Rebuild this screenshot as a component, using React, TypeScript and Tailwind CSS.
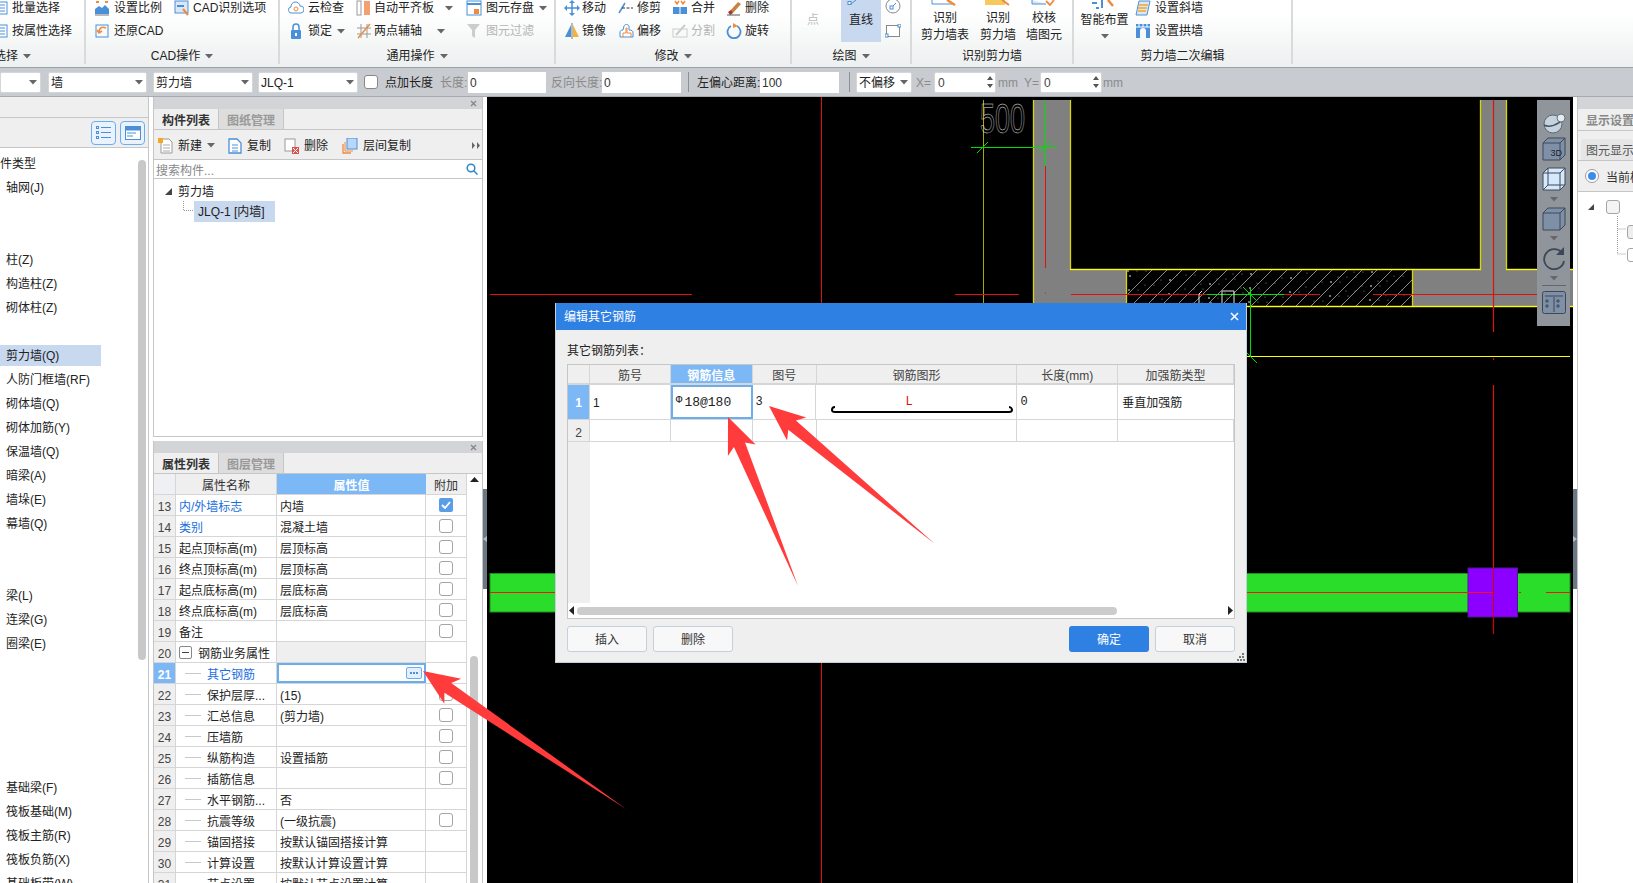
import type { ReactNode } from "react";

const BLUE = "#4a90d9";
const ORANGE = "#f08a3c";

const Caret = ({ className = "" }: { className?: string }) => (
  <svg width="8" height="5" viewBox="0 0 8 5" className={`shrink-0 ${className}`}>
    <path d="M0 0h8L4 4.5z" fill="#666" />
  </svg>
);

const Ic = ({ children, w = 16, h = 16 }: { children: ReactNode; w?: number; h?: number }) => (
  <svg width={w} height={h} viewBox={`0 0 ${w} ${h}`} fill="none" className="shrink-0">
    {children}
  </svg>
);

const icons: Record<string, ReactNode> = {
  list: <Ic><rect x="1" y="2" width="14" height="12" stroke={BLUE} fill="#fff" /><path d="M3 5h10M3 8h10M3 11h10" stroke={BLUE} /></Ic>,
  scale: <Ic><path d="M1 14V9l4-3 3 2 3-3 4 4v5z" fill={BLUE} /><path d="M1 15h14" stroke="#777" /><path d="M2 2h3M11 2h3" stroke={ORANGE} strokeWidth="2" /></Ic>,
  cad: <Ic><rect x="1" y="1" width="13" height="12" fill="#dbe7f5" stroke={BLUE} /><path d="M9 9l5 6" stroke={ORANGE} strokeWidth="2" /><path d="M3 6h7" stroke={BLUE} strokeWidth="2" /></Ic>,
  restore: <Ic><rect x="2" y="2" width="12" height="12" stroke={BLUE} /><path d="M12 5c-4-2-7 0-7 4M3 7l2 3 3-2" stroke={ORANGE} strokeWidth="1.6" /></Ic>,
  cloud: <Ic><path d="M4 13a3 3 0 0 1-1-6 4.500 4.500 0 0 1 9-1 3.500 3.500 0 0 1 1 7z" stroke={BLUE} fill="#fff" /><circle cx="8" cy="9" r="2" stroke={ORANGE} /></Ic>,
  align: <Ic><rect x="1" y="1" width="4" height="14" fill="#fff" stroke="#999" /><rect x="8" y="1" width="6" height="14" fill="#f5a070" /></Ic>,
  save: <Ic><rect x="1" y="1" width="14" height="14" fill="#fff" stroke={BLUE} /><path d="M1 4h14" stroke={BLUE} strokeWidth="2" /><rect x="8" y="9" width="5" height="5" fill={ORANGE} /></Ic>,
  lock: <Ic><path d="M5 7V4a3 3 0 0 1 6 0v3" stroke={BLUE} strokeWidth="1.500" /><rect x="3" y="7" width="10" height="9" rx="1" fill={BLUE} /><rect x="7" y="10" width="2" height="3" fill="#fff" /></Ic>,
  axis: <Ic><path d="M1 5h14M1 11h14M5 1v14M11 1v14" stroke="#999" /><path d="M2 15L14 1" stroke={ORANGE} strokeWidth="1.500" /></Ic>,
  filter: <Ic><path d="M1 1h13L9 7v8l-3-2V7z" fill="#ccc" /></Ic>,
  move: <Ic><path d="M8 1v14M1 8h14" stroke={BLUE} strokeWidth="1.500" /><path d="M8 0l3 3H5zM8 16l-3-3h6zM0 8l3-3v6zM16 8l-3 3V5z" fill={BLUE} /></Ic>,
  trim: <Ic><path d="M1 13L7 3" stroke={BLUE} strokeWidth="1.500" /><path d="M4 8h11" stroke="#333" strokeDasharray="3 1.500" /></Ic>,
  merge: <Ic><rect x="1" y="7" width="14" height="7" fill={BLUE} /><path d="M8 7v7" stroke="#fff" /><path d="M3 1l2 3 2-3M9 1l2 3 2-3" stroke={ORANGE} strokeWidth="1.500" /></Ic>,
  erase: <Ic><path d="M4 11l8-9 3 2-8 9z" fill="#c9823d" /><path d="M2 12l3-2 2 3-3 2z" fill="#a33" /><path d="M1 15h13" stroke="#555" /></Ic>,
  mirror: <Ic><path d="M7 2v12H1z" fill={BLUE} /><path d="M9 2v12h6z" fill="#f5b23c" /><path d="M8 0v16" stroke="#777" /></Ic>,
  offset: <Ic><path d="M2 14V9c0-1 1-2 3-2l1-4c1-2 4-2 5 0v4c3 0 4 1 4 3v4z" stroke={BLUE} fill="#fff" /><path d="M5 14v-4h3V5h1v5h4v4" stroke={ORANGE} /></Ic>,
  split: <Ic><rect x="1" y="6" width="14" height="8" stroke="#ccc" /><path d="M4 12L13 2" stroke="#ccc" strokeWidth="2" /></Ic>,
  rotate: <Ic><path d="M5 3a6.500 6.500 0 1 0 6 0" stroke={BLUE} strokeWidth="1.800" /><path d="M7 0l5 3-5 2z" fill={ORANGE} /></Ic>,
  slant: <Ic><path d="M4 1h11l-3 14H1z" fill="#dbe7f5" stroke={BLUE} /><path d="M4 5h9M3 8h9M3 11h8" stroke="#f5a623" strokeWidth="1.500" /></Ic>,
  arch: <Ic><path d="M1 1h14v14h-4v-7a3 3 0 0 0-6 0v7H1z" fill={BLUE} /><path d="M1 4h14M4 1v3M8 1v3M12 1v3" stroke="#fff" /></Ic>,
  create: <Ic><path d="M3 1h8l3 3v11H3z" fill="#fff" stroke="#999" /><path d="M5 7h7M5 10h7M5 13h7" stroke="#aaa" /><rect x="0" y="0" width="5" height="5" fill="#f5a623" /></Ic>,
  copy: <Ic><path d="M2 1h8l4 4v10H2z" fill="#fff" stroke={BLUE} strokeWidth="1.300" /><path d="M5 7h6M5 10h6M5 13h6" stroke={BLUE} /></Ic>,
  del: <Ic><rect x="1" y="1" width="10" height="12" fill="#fff" stroke="#999" /><rect x="8" y="9" width="7" height="7" fill="#d9534f" /><path d="M9 10l5 5M14 10l-5 5" stroke="#fff" /></Ic>,
  layers: <Ic><path d="M1 6v9h8" stroke={ORANGE} strokeWidth="1.300" /><path d="M3 4v9h8" stroke={ORANGE} /><rect x="5" y="0" width="10" height="11" fill="#b9d7fa" stroke={BLUE} /></Ic>,
};

function RI({ icon, text, caret, off, gap = 4, cg = 5 }: { icon: string; text: string; caret?: boolean; off?: boolean; gap?: number; cg?: number }) {
  return (
    <div className="flex items-center h-[22px]">
      {icons[icon]}
      <span className={`whitespace-nowrap ${off ? "text-[#b5b5b5]" : "text-[#222]"}`} style={{ marginLeft: gap }}>{text}</span>
      {caret && <span className="flex" style={{ marginLeft: cg }}><Caret /></span>}
    </div>
  );
}

function Group({ w, label, children, labelClass = "justify-center", caret = true }: { w: number; label: string; children: ReactNode; labelClass?: string; caret?: boolean }) {
  return (
    <div className="flex flex-col h-[64px] border-r-2 border-[#d8dbdd] shrink-0" style={{ width: w }}>
      <div className="h-[44px] flex overflow-hidden relative">{children}</div>
      <div className={`flex-1 flex items-center gap-[5px] pt-[4px] text-[#222] ${labelClass}`}>
        <span>{label}</span>
        {caret && <Caret />}
      </div>
    </div>
  );
}

function BigBtn({ w, a, b, stub }: { w: number; a: string; b: string; stub: ReactNode }) {
  return (
    <div className="flex flex-col items-center leading-[17px] text-[#222] shrink-0" style={{ width: w }}>
      <div className="h-[11px]">{stub}</div>
      <span>{a}</span>
      <span className="whitespace-nowrap">{b}</span>
    </div>
  );
}

function Ribbon() {
  return (
    <div className="h-[67px] shrink-0 flex bg-linear-to-b from-white from-20% to-[#edf0f0] overflow-hidden">
      <Group w={86} label="选择" labelClass="justify-start -ml-[6px]">
        <div className="-mt-[3px] -ml-[8px] flex flex-col gap-[1px]">
          <RI icon="list" text="批量选择" />
          <RI icon="list" text="按属性选择" />
        </div>
      </Group>
      <Group w={194} label="CAD操作">
        <div className="-mt-[3px] ml-[8px] w-[80px] flex flex-col gap-[1px]">
          <RI icon="scale" text="设置比例" />
          <RI icon="restore" text="还原CAD" />
        </div>
        <div className="-mt-[3px]">
          <RI icon="cad" text="CAD识别选项" gap={3} />
        </div>
      </Group>
      <Group w={276} label="通用操作">
        <div className="-mt-[3px] ml-[8px] w-[68px] flex flex-col gap-[1px]">
          <RI icon="cloud" text="云检查" />
          <RI icon="lock" text="锁定" caret />
        </div>
        <div className="-mt-[3px] w-[110px] flex flex-col gap-[1px]">
          <RI icon="align" text="自动平齐板" gap={2} caret cg={11} />
          <RI icon="axis" text="两点辅轴" gap={2} caret cg={15} />
        </div>
        <div className="-mt-[3px] flex flex-col gap-[1px]">
          <RI icon="save" text="图元存盘" caret />
          <RI icon="filter" text="图元过滤" off />
        </div>
      </Group>
      <Group w={236} label="修改">
        <div className="-mt-[3px] ml-[8px] w-[54px] flex flex-col gap-[1px]">
          <RI icon="move" text="移动" gap={2} />
          <RI icon="mirror" text="镜像" gap={2} />
        </div>
        <div className="-mt-[3px] w-[54px] flex flex-col gap-[1px]">
          <RI icon="trim" text="修剪" gap={3} />
          <RI icon="offset" text="偏移" gap={3} />
        </div>
        <div className="-mt-[3px] w-[54px] flex flex-col gap-[1px]">
          <RI icon="merge" text="合并" gap={3} />
          <RI icon="split" text="分割" gap={3} off />
        </div>
        <div className="-mt-[3px] flex flex-col gap-[1px]">
          <RI icon="erase" text="删除" gap={3} />
          <RI icon="rotate" text="旋转" gap={3} />
        </div>
      </Group>
      <Group w={120} label="绘图">
        <div className="w-[42px] pt-[12px] text-center text-[#bbb]">点</div>
        <div className="ml-[7px] w-[40px] h-[42px] bg-[#c7d8ef] pt-[12px] text-center text-[#222] relative">
          直线
          <svg width="14" height="10" viewBox="0 0 14 10" className="absolute left-[5px] top-0">
            <path d="M5 4L10 0" stroke={BLUE} />
            <rect x="2" y="1.500" width="3" height="3" fill="#fff" stroke={BLUE} />
          </svg>
        </div>
        <div className="ml-[4px] flex flex-col">
          <svg width="16" height="24" viewBox="0 0 16 24">
            <circle cx="8" cy="6" r="7" fill="#fff" stroke="#888" />
            <path d="M6 8l5-5" stroke={BLUE} />
            <rect x="5" y="6" width="3" height="3" fill="#fff" stroke={BLUE} />
          </svg>
          <svg width="16" height="14" viewBox="0 0 16 14">
            <rect x="1.500" y="1.500" width="13" height="11" fill="#fff" stroke="#888" />
            <rect x="0" y="10" width="3" height="3" fill="#fff" stroke={BLUE} />
            <rect x="13" y="0" width="3" height="3" fill="#fff" stroke={BLUE} />
          </svg>
        </div>
      </Group>
      <Group w={162} label="识别剪力墙" caret={false}>
        <BigBtn w={66} a="识别" b="剪力墙表" stub={<svg width="30" height="6" viewBox="0 0 30 6"><path d="M2 0v4h20" stroke={BLUE} fill="none" /><path d="M17 0l8 5" stroke={ORANGE} strokeWidth="2.500" /></svg>} />
        <BigBtn w={40} a="识别" b="剪力墙" stub={<svg width="30" height="6" viewBox="0 0 30 6"><rect x="2" y="0" width="20" height="5" fill="#f7c95c" /><path d="M19 0l7 5" stroke={ORANGE} strokeWidth="2" /></svg>} />
        <BigBtn w={52} a="校核" b="墙图元" stub={<svg width="28" height="6" viewBox="0 0 28 6"><path d="M2 0v4h14" stroke={BLUE} fill="#dbe7f5" /><path d="M16 1l4 4 4-5" stroke={ORANGE} strokeWidth="1.800" fill="none" /></svg>} />
      </Group>
      <Group w={219} label="剪力墙二次编辑" caret={false}>
        <div className="w-[61px] flex flex-col items-center text-[#222] leading-[16px] shrink-0">
          <div className="h-[12px]">
            <svg width="30" height="9" viewBox="0 0 30 9"><path d="M2 3h5M12 0v8M6 8h3" stroke={BLUE} strokeWidth="2" /><path d="M18 0l5 6" stroke={ORANGE} strokeWidth="2.500" /></svg>
          </div>
          <span className="whitespace-nowrap">智能布置</span>
          <Caret className="mt-[6px]" />
        </div>
        <div className="-mt-[3px] flex flex-col gap-[1px]">
          <RI icon="slant" text="设置斜墙" />
          <RI icon="arch" text="设置拱墙" />
        </div>
      </Group>
      <div className="flex-1" />
    </div>
  );
}

function Combo({ w, text }: { w: number; text: string }) {
  return (
    <div className="h-[21px] bg-white border border-[#d4d6d9] rounded-[2px] flex items-center pl-[2px] pr-[3px] justify-between text-[#222] shrink-0" style={{ width: w }}>
      <span className="pt-[2px]">{text}</span>
      <Caret />
    </div>
  );
}

const Inp = ({ w, text }: { w: number; text: string }) => (
  <div className="h-[21px] bg-white flex items-center pl-[2px] pt-[2px] text-[#333] shrink-0" style={{ width: w }}>{text}</div>
);

function Spin({ w, text }: { w: number; text: string }) {
  return (
    <div className="h-[21px] bg-white border border-[#d4d6d9] rounded-[2px] flex items-center justify-between pl-[3px] pr-[2px] text-[#444] shrink-0" style={{ width: w }}>
      <span className="pt-[2px]">{text}</span>
      <span className="flex flex-col gap-[4px]">
        <svg width="6" height="4" viewBox="0 0 6 4"><path d="M0 4h6L3 0z" fill="#555" /></svg>
        <svg width="6" height="4" viewBox="0 0 6 4"><path d="M0 0h6L3 4z" fill="#555" /></svg>
      </span>
    </div>
  );
}

function Toolbar() {
  return (
    <div className="h-[30px] shrink-0 bg-[#c8cbd0] border-t border-t-[#9da2a7] border-b border-b-[#a7abb0] flex items-center overflow-hidden">
      <Combo w={41} text="" />
      <div className="w-[7px]" />
      <Combo w={99} text="墙" />
      <div className="w-[6px]" />
      <Combo w={100} text="剪力墙" />
      <div className="w-[5px]" />
      <Combo w={100} text="JLQ-1" />
      <div className="w-[6px] shrink-0" />
      <div className="w-[14px] h-[14px] bg-white border border-[#888] rounded-[3px] shrink-0" />
      <span className="ml-[7px] pt-[2px] w-[55px] shrink-0 text-[#222] whitespace-nowrap">点加长度</span>
      <span className="w-[28px] pt-[2px] shrink-0 text-[#8a8a8a] whitespace-nowrap">长度:</span>
      <Inp w={78} text="0" />
      <span className="ml-[5px] pt-[2px] w-[51px] shrink-0 text-[#8a8a8a] whitespace-nowrap">反向长度:</span>
      <Inp w={79} text="0" />
      <div className="ml-[7px] w-[1px] h-[20px] bg-[#8d9095] shrink-0" />
      <span className="ml-[8px] pt-[2px] w-[63px] shrink-0 text-[#222] whitespace-nowrap">左偏心距离:</span>
      <Inp w={79} text="100" />
      <div className="ml-[10px] w-[1px] h-[20px] bg-[#8d9095] shrink-0" />
      <div className="w-[6px] shrink-0" />
      <Combo w={56} text="不偏移" />
      <span className="ml-[4px] pt-[2px] w-[18px] shrink-0 text-[#8a8a8a]">X=</span>
      <Spin w={62} text="0" />
      <span className="ml-[2px] pt-[2px] w-[26px] shrink-0 text-[#8a8a8a]">mm</span>
      <span className="w-[16px] pt-[2px] shrink-0 text-[#8a8a8a]">Y=</span>
      <Spin w={62} text="0" />
      <span className="ml-[1px] pt-[2px] text-[#8a8a8a]">mm</span>
    </div>
  );
}

const LEFT_ITEMS = ["件类型", "轴网(J)", "", "", "柱(Z)", "构造柱(Z)", "砌体柱(Z)", "", "剪力墙(Q)", "人防门框墙(RF)", "砌体墙(Q)", "砌体加筋(Y)", "保温墙(Q)", "暗梁(A)", "墙垛(E)", "幕墙(Q)", "", "", "梁(L)", "连梁(G)", "圈梁(E)", "", "", "", "", "", "基础梁(F)", "筏板基础(M)", "筏板主筋(R)", "筏板负筋(X)", "基础板带(W)"];

function LeftPanel() {
  return (
    <div className="w-[149px] shrink-0 border-r border-[#c6c6c6] flex flex-col h-full overflow-hidden">
      <div className="h-[21px] bg-[#efefef] border-b border-[#c6c6c6] shrink-0" />
      <div className="h-[30px] bg-[#efefef] border-b border-[#c6c6c6] flex items-center justify-end gap-[4px] pr-[3px] shrink-0">
        <div className="w-[25px] h-[24px] rounded-[4px] border border-[#6aaef0] bg-[#eaf3fd] flex items-center justify-center">
          <svg width="15" height="13" viewBox="0 0 15 13" fill="none" stroke={BLUE}>
            <rect x="0.500" y="0.500" width="2" height="2" /><rect x="0.500" y="5.500" width="2" height="2" /><rect x="0.500" y="10.500" width="2" height="2" />
            <path d="M5 1.500h10M5 6.500h10M5 11.500h10" />
          </svg>
        </div>
        <div className="w-[25px] h-[24px] rounded-[4px] border border-[#6aaef0] bg-[#eaf3fd] flex items-center justify-center">
          <svg width="16" height="14" viewBox="0 0 16 14" fill="none">
            <rect x="0.500" y="0.500" width="15" height="13" fill="#fff" stroke={BLUE} />
            <rect x="0.500" y="0.500" width="15" height="4" fill={BLUE} />
            <path d="M2 7h9M2 10h6" stroke={BLUE} />
          </svg>
        </div>
      </div>
      <div className="flex-1 flex bg-white overflow-hidden">
        <div className="flex-1 pt-[3px]">
          {LEFT_ITEMS.map((t, i) => (
            <div key={i} className="h-[24px] flex items-center">
              {t && (
                <div className={`w-[101px] h-[21px] flex items-center pt-[2px] whitespace-nowrap text-[#222] ${i === 0 ? "pl-0" : "pl-[6px]"} ${t === "剪力墙(Q)" ? "bg-[#c7d8ef]" : ""}`}>
                  {t}
                </div>
              )}
            </div>
          ))}
        </div>
        <div className="w-[8px] h-[500px] mt-[12px] mr-[2px] rounded-[4px] bg-[#c8c8c8] shrink-0" />
      </div>
    </div>
  );
}

function TitleBar() {
  return (
    <div className="h-[12px] bg-[#d2d4d8] flex items-center justify-end pr-[5px] shrink-0">
      <svg width="7" height="7" viewBox="0 0 7 7"><path d="M1 1l5 5M6 1l-5 5" stroke="#888" strokeWidth="1.400" /></svg>
    </div>
  );
}

function Tabs({ a, b }: { a: string; b: string }) {
  return (
    <div className="h-[21px] bg-[#efefef] border-b border-[#c6c6c6] flex shrink-0">
      <div className="w-[65px] flex items-center justify-center pt-[3px] font-bold text-[#333] border-r border-[#c6c6c6]">{a}</div>
      <div className="w-[65px] flex items-center justify-center pt-[3px] font-bold text-[#999] bg-[#dddddd] border-r border-[#c6c6c6]">{b}</div>
    </div>
  );
}

function ComponentPanel() {
  return (
    <div className="h-[340px] border border-[#c6c6c6] border-t-0 flex flex-col shrink-0 overflow-hidden">
      <TitleBar />
      <Tabs a="构件列表" b="图纸管理" />
      <div className="h-[30px] bg-[#efefef] border-b border-[#c6c6c6] flex items-center pl-[4px] pt-[2px] text-[#333] shrink-0">
        <div className="w-[69px]"><RI icon="create" text="新建" caret /></div>
        <div className="w-[57px]"><RI icon="copy" text="复制" /></div>
        <div className="w-[58px]"><RI icon="del" text="删除" /></div>
        <RI icon="layers" text="层间复制" gap={5} />
        <svg width="8" height="7" viewBox="0 0 8 7" className="ml-auto mr-[2px]"><path d="M0 0l3 3.500L0 7zM5 0l3 3.500L5 7z" fill="#666" /></svg>
      </div>
      <div className="h-[19px] border-b border-[#c6c6c6] flex items-center justify-between pl-[2px] pr-[4px] text-[#888] bg-white shrink-0">
        <span className="pt-[3px]">搜索构件...</span>
        <svg width="12" height="12" viewBox="0 0 12 12" fill="none" stroke="#2b86c5" strokeWidth="1.500"><circle cx="5" cy="5" r="3.800" /><path d="M8 8l3.500 3.500" /></svg>
      </div>
      <div className="flex-1 bg-white pl-[11px] pt-[3px]">
        <div className="flex items-center h-[19px] text-[#222]">
          <svg width="7" height="7" viewBox="0 0 7 7"><path d="M7 0v7H0z" fill="#444" /></svg>
          <span className="ml-[6px]">剪力墙</span>
        </div>
        <div className="flex">
          <svg width="30" height="21" viewBox="0 0 30 21" className="shrink-0 -ml-[1px]"><path d="M19.500 0v9.500H29" stroke="#999" strokeDasharray="1 1" fill="none" /></svg>
          <div className="w-[81px] h-[21px] bg-[#c7d8ef] flex items-center pl-[4px] text-[#222] whitespace-nowrap">JLQ-1 [内墙]</div>
        </div>
      </div>
    </div>
  );
}

type Row = { n: number; name: string; value?: string; cb?: boolean | "on"; blue?: boolean; child?: boolean };

const ROWS: Row[] = [
  { n: 13, name: "内/外墙标志", value: "内墙", cb: "on", blue: true },
  { n: 14, name: "类别", value: "混凝土墙", cb: true, blue: true },
  { n: 15, name: "起点顶标高(m)", value: "层顶标高", cb: true },
  { n: 16, name: "终点顶标高(m)", value: "层顶标高", cb: true },
  { n: 17, name: "起点底标高(m)", value: "层底标高", cb: true },
  { n: 18, name: "终点底标高(m)", value: "层底标高", cb: true },
  { n: 19, name: "备注", cb: true },
  { n: 20, name: "钢筋业务属性" },
  { n: 21, name: "其它钢筋", blue: true, child: true },
  { n: 22, name: "保护层厚...", value: "(15)", cb: true, child: true },
  { n: 23, name: "汇总信息", value: "(剪力墙)", cb: true, child: true },
  { n: 24, name: "压墙筋", cb: true, child: true },
  { n: 25, name: "纵筋构造", value: "设置插筋", cb: true, child: true },
  { n: 26, name: "插筋信息", cb: true, child: true },
  { n: 27, name: "水平钢筋...", value: "否", child: true },
  { n: 28, name: "抗震等级", value: "(一级抗震)", cb: true, child: true },
  { n: 29, name: "锚固搭接", value: "按默认锚固搭接计算", child: true },
  { n: 30, name: "计算设置", value: "按默认计算设置计算", child: true },
  { n: 31, name: "节点设置", value: "按默认节点设置计算", child: true },
];

function Check({ on }: { on?: boolean }) {
  return on ? (
    <div className="w-[14px] h-[14px] rounded-[2px] bg-[#5b9ee8] flex items-center justify-center">
      <svg width="10" height="8" viewBox="0 0 10 8" fill="none"><path d="M1 4l3 3 5-6" stroke="#fff" strokeWidth="1.800" /></svg>
    </div>
  ) : (
    <div className="w-[14px] h-[14px] rounded-[3px] bg-white border border-[#a5a5a5]" />
  );
}

function PropRow({ r }: { r: Row }) {
  const sel = r.n === 21;
  const group = r.n === 20;
  return (
    <div className="h-[21px] flex border-b border-[#d6d6d6] shrink-0">
      <div className={`w-[22px] shrink-0 flex items-center justify-center pt-[3px] border-r border-[#d6d6d6] ${sel ? "bg-[#7db8f6] text-white font-bold" : "bg-[#efefef] text-[#444]"}`}>{r.n}</div>
      <div className="w-[101px] shrink-0 flex items-center border-r border-[#d6d6d6] whitespace-nowrap overflow-hidden">
        {r.child && <div className="ml-[9px] w-[16px] h-[1px] bg-[#c8c8c8] shrink-0" />}
        {group && (
          <div className="ml-[3px] mr-[6px] w-[13px] h-[13px] border border-[#888] rounded-[2px] flex items-center justify-center">
            <div className="w-[7px] h-[1px] bg-[#444]" />
          </div>
        )}
        <span className={`pt-[4px] ${r.child ? "ml-[6px]" : group ? "" : "ml-[3px]"} ${r.blue ? "text-[#1a6fe0]" : "text-[#222]"}`}>{r.name}</span>
      </div>
      <div className={`w-[149px] shrink-0 flex items-center whitespace-nowrap text-[#222] pl-[3px] ${sel ? "border-2 border-[#6aaef0] bg-white justify-end pr-[2px]" : "border-r border-[#d6d6d6] pt-[4px]"} ${group ? "bg-[#efefef]" : ""}`}>
        {sel ? (
          <div className="w-[16px] h-[12px] rounded-[2px] border border-[#6aaef0] bg-[#e3effc] flex items-center justify-center gap-[1px]">
            <i className="w-[2px] h-[2px] bg-[#4a90d9]" /><i className="w-[2px] h-[2px] bg-[#4a90d9]" /><i className="w-[2px] h-[2px] bg-[#4a90d9]" />
          </div>
        ) : r.value}
      </div>
      <div className="w-[41px] shrink-0 flex items-center justify-center pr-[1px] border-r border-[#d6d6d6]">
        {r.cb && <Check on={r.cb === "on"} />}
      </div>
    </div>
  );
}

function PropertyPanel() {
  return (
    <div className="flex-1 border-l border-r border-[#c6c6c6] flex flex-col overflow-hidden">
      <TitleBar />
      <Tabs a="属性列表" b="图层管理" />
      <div className="flex flex-1 bg-white overflow-hidden">
        <div className="w-[313px] shrink-0 flex flex-col">
          <div className="h-[21px] flex border-b border-[#d6d6d6] shrink-0 bg-[#efefef] text-[#333]">
            <div className="w-[22px] border-r border-[#d6d6d6] bg-[#eef0f3]" />
            <div className="w-[101px] flex items-center justify-center pt-[4px] border-r border-[#d6d6d6]">属性名称</div>
            <div className="w-[149px] flex items-center justify-center pt-[4px] bg-[#7db8f6] text-white font-bold">属性值</div>
            <div className="w-[41px] flex items-center justify-center pt-[4px] border-r border-[#d6d6d6]">附加</div>
          </div>
          {ROWS.map((r) => <PropRow key={r.n} r={r} />)}
        </div>
        <div className="flex-1 flex flex-col items-center pt-[2px] pr-[1px]">
          <svg width="9" height="5" viewBox="0 0 9 5" className="mt-[1px]"><path d="M0 5h9L4.500 0z" fill="#222" /></svg>
          <div className="w-[8px] flex-1 mt-[174px] rounded-t-[4px] bg-[#c8c8c8]" />
        </div>
      </div>
    </div>
  );
}

const Handle = ({ side }: { side: "l" | "r" }) => (
  <div className="w-[4px] h-full shrink-0 bg-white flex flex-col">
    <div className="mt-[392px] h-[100px] bg-[#6b7785] flex items-center justify-center">
      <svg width="4" height="6" viewBox="0 0 4 6">
        <path d={side === "l" ? "M4 0v6L0 3z" : "M0 0v6l4-3z"} fill="#b5bac0" />
      </svg>
    </div>
  </div>
);

const hatch = Array.from({ length: 22 }, (_, i) => 1116 + i * 15);
const specks = Array.from({ length: 90 }, (_, i) => ({
  x: 1128 + ((i * 137) % 282),
  y: 271 + ((i * 59) % 33),
  r: i % 5 === 0 ? 1.1 : 0.6,
}));

function Canvas() {
  return (
    <svg width="1086" height="786" viewBox="487 97 1086 786" className="block">
      <rect x="487" y="97" width="1086" height="786" fill="#000" />
      {/* walls */}
      <path d="M1033 100H1070V269H1480V100H1506V269H1573V306H1033Z" fill="#808080" />
      <rect x="1126" y="269" width="286" height="37" fill="#000" />
      <clipPath id="hatchClip"><rect x="1126" y="269" width="286" height="37" /></clipPath>
      <g clipPath="url(#hatchClip)">
        {hatch.map((x) => <path key={x} d={`M${x} 306L${x + 37} 269`} stroke="#8a8a8a" />)}
        {specks.map((s, i) => <circle key={i} cx={s.x} cy={s.y} r={s.r} fill="#8f8f8f" />)}
      </g>
      <path d="M1033.500 100V306M1070.500 100V269.500H1480.500V100M1506.500 100V269.500H1573M1126.500 269V306M1412.500 269V306M1033 306.500H1573" stroke="#d8d800" strokeWidth="1.300" fill="none" />
      <path d="M1070 269.500H1480.500M1506.500 269.500H1573M1240 306.500H1573" stroke="#ffff00" />
      <path d="M983.500 100V303" stroke="#a8a800" />
      <path d="M1247 356.500H1570" stroke="#ffff00" />
      {/* axis lines */}
      <g stroke="#e01010" fill="none">
        <path d="M821.500 97V883" />
        <path d="M1045.500 166V268M1045 293h1" />
        <path d="M490 294.500H692M955 294.500H1019M1071 294.500H1207M1284 294.500H1320M1373 294.500H1537" />
        <path d="M1493.500 100V332M1493.500 358V360M1493.500 385V634" strokeWidth="1.200" />
      </g>
      {/* dimension */}
      <text x="980" y="133" fontSize="42" fontFamily="Liberation Sans, sans-serif" fill="none" stroke="#e0e0e0" strokeWidth="0.500" textLength="45" lengthAdjust="spacingAndGlyphs">500</text>
      <g stroke="#00e000" fill="none">
        <path d="M971 147.500H1057M1045.500 100V166M977 153l11-11M1039 153l12-12" />
        <path d="M1207 294.500H1284M1250.500 288V356M1243 287l14 14M1247 353l10 10" />
      </g>
      <path d="M1199 303v-9l3-3M1222 303v-12h12v12" stroke="#e8e8e8" fill="none" />
      {/* beam */}
      <rect x="490" y="573.500" width="1080" height="38.500" fill="#2bdd2b" stroke="#1d8f1d" />
      <rect x="1468" y="568" width="49.500" height="49" fill="#8b00ff" stroke="#4a1a8f" />
      <path d="M490 592.500H1493M1519 592.500H1521M1546 592.500H1570" stroke="#ff1010" />
      <path d="M1493.500 568V634" stroke="#d00000" />
    </svg>
  );
}

function NavTools() {
  const box = (fill: string) => (
    <svg width="24" height="24" viewBox="0 0 24 24" fill="none" stroke="#3c4856">
      <path d="M1 6l5-5h17v17l-5 5H1z" fill={fill} />
      <path d="M1 6h17v17M18 6l5-5" />
    </svg>
  );
  return (
    <div className="absolute right-[3px] top-[3px] w-[33px] h-[226px] bg-[#90959c] flex flex-col items-center pt-[12px]">
      <svg width="24" height="22" viewBox="0 0 24 22">
        <circle cx="11" cy="12" r="9" fill="#c6d2de" stroke="#5d6a78" />
        <path d="M2 13c5 3 14 0 19-6" stroke="#4a5562" fill="none" strokeWidth="1.500" />
        <circle cx="19" cy="6" r="4" fill="#e5ebf1" stroke="#66727f" />
      </svg>
      <div className="mt-[3px] relative">
        {box("#7e90a8")}
        <span className="absolute left-[9px] top-[11px] text-[9px] leading-[11px] text-[#222]">3D</span>
      </div>
      <div className="mt-[6px]">
        <svg width="24" height="24" viewBox="0 0 24 24" fill="#d6e8fb" stroke="#3c4856">
          <path d="M1 6l5-5h17v17l-5 5H1z" />
          <path d="M6 1v17h17M6 18l-5 5M1 6h17v17M18 6l5-5" fill="none" />
        </svg>
      </div>
      <Caret className="mt-[6px]" />
      <div className="mt-[5px]">{box("#7e90a8")}</div>
      <Caret className="mt-[5px]" />
      <svg width="24" height="24" viewBox="0 0 24 24" fill="none" className="mt-[5px]">
        <path d="M20 7a10 10 0 1 0 2 8" stroke="#3c4856" strokeWidth="1.800" />
        <path d="M22 1v8h-8z" fill="#3c4856" />
      </svg>
      <Caret className="mt-[6px]" />
      <div className="w-[24px] h-[1px] bg-[#5f6872] mt-[4px]" />
      <svg width="24" height="24" viewBox="0 0 24 24" fill="#7e90a8" stroke="#3c4856" className="mt-[4px]">
        <rect x="0.500" y="1.500" width="23" height="22" rx="2" />
        <path d="M3 6h18M12 7v15M4 10h2v2H4zM4 15h2v2H4zM15 10h2v2h-2zM15 15h2v2h-2z" fill="none" />
      </svg>
    </div>
  );
}

function RightPanel() {
  return (
    <div className="flex-1 border-l border-[#c6c6c6] flex flex-col overflow-hidden whitespace-nowrap text-[#333]">
      <div className="h-[12px] bg-[#d2d4d8] shrink-0" />
      <div className="h-[22px] bg-[#efefef] border-b border-[#c6c6c6] flex items-center pl-[8px] pt-[3px] font-bold text-[#888] shrink-0">显示设置</div>
      <div className="h-[8px] bg-[#efefef] shrink-0" />
      <div className="h-[22px] bg-[#efefef] border-b border-[#c6c6c6] shrink-0 pl-[3px]">
        <div className="h-full bg-[#e6e6e6] rounded-t-[3px] flex items-center pl-[5px] pt-[3px] text-[#555]">图元显示</div>
      </div>
      <div className="h-[31px] bg-[#efefef] border-b border-[#c6c6c6] flex items-center pl-[7px] shrink-0">
        <div className="w-[14px] h-[14px] rounded-full border border-[#999] bg-white flex items-center justify-center shrink-0">
          <div className="w-[8px] h-[8px] rounded-full bg-[#3b8be8]" />
        </div>
        <span className="ml-[7px] pt-[3px]">当前楼层</span>
      </div>
      <div className="flex-1 bg-white pl-[10px] pt-[8px]">
        <div className="flex items-center h-[14px]">
          <svg width="6" height="6" viewBox="0 0 6 6"><path d="M6 0v6H0z" fill="#444" /></svg>
          <div className="ml-[12px] w-[14px] h-[14px] rounded-[3px] border border-[#a5a5a5] bg-[#f4f4f4]" />
        </div>
        <div className="flex">
          <svg width="39" height="50" viewBox="0 0 39 50" className="shrink-0"><path d="M29.500 2v38M29.500 15H38M29.500 40H38" stroke="#999" strokeDasharray="1 1" fill="none" /></svg>
          <div className="flex flex-col mt-[11px] gap-[9px]">
            <div className="w-[14px] h-[14px] rounded-[3px] border border-[#a5a5a5] bg-[#eee]" />
            <div className="w-[14px] h-[14px] rounded-[3px] border border-[#a5a5a5]" />
          </div>
        </div>
      </div>
    </div>
  );
}

const DLG_COLS = [
  { t: "筋号", w: 81 },
  { t: "钢筋信息", w: 82, on: true },
  { t: "图号", w: 64 },
  { t: "钢筋图形", w: 201 },
  { t: "长度(mm)", w: 101 },
  { t: "加强筋类型", w: 116 },
];

function DlgBtn({ text, primary, w = 80 }: { text: string; primary?: boolean; w?: number }) {
  return (
    <div className={`h-[26px] rounded-[3px] flex items-center justify-center pt-[2px] shrink-0 ${primary ? "bg-[#2e80e3] text-white" : "bg-[#f8f8f8] border border-[#c6cfdc] text-[#333]"}`} style={{ width: w }}>
      {text}
    </div>
  );
}

function Dialog() {
  return (
    <div className="absolute left-[555px] top-[303px] w-[692px] h-[360px] bg-[#efefef] border border-[#c6cfdc] border-t-0 flex flex-col">
      <div className="h-[27px] bg-[#2e80e3] text-white flex items-center justify-between pl-[8px] pr-[7px] shrink-0">
        <span>编辑其它钢筋</span>
        <svg width="9" height="9" viewBox="0 0 9 9"><path d="M1 1l7 7M8 1l-7 7" stroke="#fff" strokeWidth="1.500" /></svg>
      </div>
      <div className="h-[34px] flex items-center pl-[11px] text-[#222] shrink-0 pt-[7px]">其它钢筋列表：</div>
      <div className="mx-[11px] h-[255px] border border-[#c6c6c6] bg-white flex flex-col shrink-0 relative">
        <div className="flex h-[20px] border-b-2 border-[#d6d6d6] shrink-0 bg-[#efefef] text-[#444]">
          <div className="w-[22px] border-r border-[#d6d6d6]" />
          {DLG_COLS.map((c) => (
            <div key={c.t} className={`flex items-center justify-center pt-[4px] border-r border-[#d6d6d6] ${c.on ? "bg-[#7db8f6] text-white font-bold" : ""}`} style={{ width: c.w }}>{c.t}</div>
          ))}
        </div>
        <div className="flex h-[35px] border-b border-[#d6d6d6] shrink-0 text-[#222]">
          <div className="w-[22px] bg-[#7db8f6] text-white font-bold flex items-center justify-center pt-[2px] border-r border-[#d6d6d6]">1</div>
          <div className="w-[81px] flex items-center pl-[3px] pt-[2px] border-r border-[#d6d6d6]">1</div>
          <div className="w-[82px] border-2 border-[#6aaef0] flex items-center pl-[3px] font-['Liberation_Mono',monospace] text-[13px] leading-none">
            <span className="text-[11px] -mt-[4px] mr-[2px]">Φ</span>18@180
          </div>
          <div className="w-[64px] flex items-center pl-[3px] border-r border-[#d6d6d6] font-['Liberation_Mono',monospace]">3</div>
          <div className="w-[201px] border-r border-[#d6d6d6] flex items-center justify-center">
            <svg width="186" height="26" viewBox="0 0 186 26" fill="none" className="ml-[14px]">
              <text x="79" y="16" fontSize="12" fontFamily="Liberation Mono, monospace" fill="#e01010" textAnchor="middle">L</text>
              <path d="M5 18c-2 0-3 1-3 3s1 2 3 2h174c2 0 3-1 3-2s-1-3-3-3" stroke="#000" strokeWidth="2" />
            </svg>
          </div>
          <div className="w-[101px] flex items-center pl-[3px] border-r border-[#d6d6d6] font-['Liberation_Mono',monospace]">0</div>
          <div className="w-[116px] flex items-center pl-[4px] pt-[2px]">垂直加强筋</div>
        </div>
        <div className="flex h-[22px] border-b border-[#d6d6d6] shrink-0">
          <div className="w-[22px] bg-[#efefef] flex items-center justify-center pt-[4px] border-r border-[#d6d6d6] text-[#444]">2</div>
          {DLG_COLS.map((c) => <div key={c.t} className="border-r border-[#d6d6d6]" style={{ width: c.w }} />)}
        </div>
        <div className="flex-1"><div className="w-[22px] h-full bg-[#efefef]" /></div>
        <div className="h-[15px] flex items-center justify-between px-[1px] shrink-0">
          <svg width="5" height="9" viewBox="0 0 5 9"><path d="M5 0v9L0 4.500z" fill="#222" /></svg>
          <div className="ml-[3px] w-[540px] h-[8px] rounded-[4px] bg-[#cccccc]" />
          <div className="flex-1" />
          <svg width="5" height="9" viewBox="0 0 5 9"><path d="M0 0v9l5-4.500z" fill="#222" /></svg>
        </div>
      </div>
      <div className="flex mx-[11px] mt-[7px] gap-[6px]">
        <DlgBtn text="插入" />
        <DlgBtn text="删除" />
        <div className="flex-1" />
        <DlgBtn text="确定" primary />
        <DlgBtn text="取消" />
      </div>
      <svg width="8" height="8" viewBox="0 0 8 8" className="absolute right-[1px] bottom-[1px]" fill="#777">
        <rect x="5" y="0" width="2" height="2" /><rect x="2" y="3" width="2" height="2" /><rect x="5" y="3" width="2" height="2" /><rect x="0" y="6" width="2" height="2" /><rect x="3" y="6" width="2" height="2" /><rect x="6" y="6" width="2" height="2" />
      </svg>
    </div>
  );
}

function arrowPoints(tx: number, ty: number, ex: number, ey: number) {
  const d = Math.hypot(ex - tx, ey - ty);
  const ux = (ex - tx) / d;
  const uy = (ey - ty) / d;
  const at = (along: number, side: number) => `${tx + ux * along - uy * side},${ty + uy * along + ux * side}`;
  return [at(0, 0), at(36, 15), at(30, 6), `${ex},${ey}`, at(30, -6), at(36, -15)].join(" ");
}

function Arrows() {
  return (
    <svg width="1633" height="883" viewBox="0 0 1633 883" className="absolute left-0 top-0 pointer-events-none">
      <polygon points={arrowPoints(423, 671, 626, 809)} fill="#ff3b3b" />
      <polygon points={arrowPoints(728, 417, 798, 586)} fill="#ff3b3b" />
      <polygon points={arrowPoints(769, 406, 935, 544)} fill="#ff3b3b" />
    </svg>
  );
}

export default function App() {
  return (
    <div className="relative w-[1633px] h-[883px] overflow-hidden bg-white flex flex-col text-[12px] leading-[16px] font-['Liberation_Sans','Noto_Sans_CJK_SC',sans-serif]">
      <Ribbon />
      <Toolbar />
      <div className="flex-1 flex min-h-0">
        <LeftPanel />
        <div className="w-[4px] shrink-0" />
        <div className="w-[330px] shrink-0 flex flex-col gap-[4px] h-full">
          <ComponentPanel />
          <PropertyPanel />
        </div>
        <Handle side="l" />
        <div className="relative w-[1086px] shrink-0 h-full bg-black">
          <Canvas />
          <NavTools />
        </div>
        <Handle side="r" />
        <RightPanel />
      </div>
      <Dialog />
      <Arrows />
    </div>
  );
}
